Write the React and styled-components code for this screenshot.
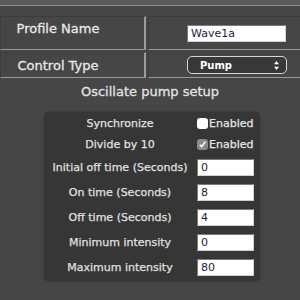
import styled, { createGlobalStyle } from "styled-components";

const GlobalStyle = createGlobalStyle`
  html, body {
    margin: 0;
    background: #464646;
  }
  body {
    width: 300px;
    height: 300px;
    overflow: hidden;
    font-family: "DejaVu Sans", Verdana, sans-serif;
    color: #e4e4e4;
  }
`;

const TopBar = styled.div`
  height: 5px;
  background: #5a5a5a;
  border-bottom: 1px solid #8e8e8e;
`;

const SettingsTable = styled.div`
  display: grid;
  grid-template-columns: 146px 1fr;
  grid-template-rows: 34px 26px;
  gap: 2px;
  margin-top: 10px;
`;

const Cell = styled.div`
  box-sizing: border-box;
  display: flex;
  align-items: center;
  border-top: 1px solid #3d3d3d;
  border-left: 1px solid #3d3d3d;
  border-right: 2px solid #9a9a9a;
  border-bottom: 1px solid #9a9a9a;
`;

const LabelCell = styled(Cell)`
  justify-content: center;
  padding: 0 29px ${(p) => p.$lift || 0}px 0;
  font-size: 13px;
  color: #e8e8e8;
  -webkit-text-stroke: 0.3px #e8e8e8;
`;

const ValueCell = styled(Cell)`
  padding-left: 38px;
  border-right: none;
`;

const TextInput = styled.input`
  box-sizing: border-box;
  width: ${(p) => p.$w || 57}px;
  height: 17px;
  margin: 0;
  padding: 0 3px;
  border: 1px solid;
  border-color: #7a7a7a #cfcfcf #cfcfcf #7a7a7a;
  background: #ffffff;
  font-family: "DejaVu Sans", Verdana, sans-serif;
  font-size: 11px;
  color: #1c1c3c;
  outline: none;
`;

const SelectBox = styled.div`
  position: relative;
  box-sizing: border-box;
  width: 100px;
  height: 18px;
  border: 1px solid #d6d6d6;
  border-radius: 5px;
  background: #383838;
  display: flex;
  align-items: center;
  padding-left: 12px;
  font-size: 10px;
  font-weight: bold;
  color: #ffffff;
`;

const Arrows = styled.svg`
  position: absolute;
  right: 6px;
  top: 3px;
`;

const Title = styled.div`
  margin-top: 6px;
  height: 16px;
  line-height: 16px;
  text-align: center;
  font-size: 13px;
  color: #e2e2e2;
  -webkit-text-stroke: 0.3px #e2e2e2;
`;

const Panel = styled.div`
  box-sizing: border-box;
  width: 216px;
  margin: 12px 0 0 44px;
  padding: 1px 6px 1px 4px;
  background: #363636;
  border-radius: 5px;
  box-shadow: 0 0 2px #2c2c2c;
  display: flex;
  flex-direction: column;
`;

const SetupRow = styled.div`
  display: grid;
  grid-template-columns: 144px 57px;
  column-gap: 5px;
  align-items: center;
  height: ${(p) => p.$h}px;
`;

const SetupLabel = styled.div`
  text-align: center;
  font-size: 11px;
  color: #e0e0e0;
  white-space: nowrap;
  -webkit-text-stroke: 0.25px #e0e0e0;
`;

const CheckWrap = styled.label`
  display: flex;
  align-items: center;
  gap: 1px;
  font-size: 11px;
  color: #e6e6e6;
  -webkit-text-stroke: 0.25px #e6e6e6;
`;

const Box = styled.span`
  box-sizing: border-box;
  width: 11px;
  height: 11px;
  border-radius: 3px;
  background: ${(p) => (p.$on ? "#8a8a8a" : "#ffffff")};
  display: flex;
  align-items: center;
  justify-content: center;
`;

const fields = [
  { label: "Initial off time (Seconds)", value: "0" },
  { label: "On time (Seconds)", value: "8" },
  { label: "Off time (Seconds)", value: "4" },
  { label: "Minimum intensity", value: "0" },
  { label: "Maximum intensity", value: "80" },
];

function Check({ on }) {
  return (
    <CheckWrap>
      <Box $on={on}>
        {on && (
          <svg width="9" height="9" viewBox="0 0 9 9">
            <path d="M1.8 4.8 L3.6 6.8 L7.4 1.6" fill="none" stroke="#fff" strokeWidth="1.5" />
          </svg>
        )}
      </Box>
      Enabled
    </CheckWrap>
  );
}

export default function App() {
  return (
    <>
      <GlobalStyle />
      <TopBar />
      <SettingsTable>
        <LabelCell $lift={10}>Profile Name</LabelCell>
        <ValueCell>
          <TextInput $w={99} defaultValue="Wave1a" />
        </ValueCell>
        <LabelCell>Control Type</LabelCell>
        <ValueCell>
          <SelectBox>
            Pump
            <Arrows width="7" height="11" viewBox="0 0 7 11">
              <path d="M3.5 1 L6 4.2 L1 4.2 Z" fill="#fff" />
              <path d="M3.5 10 L6 6.8 L1 6.8 Z" fill="#fff" />
            </Arrows>
          </SelectBox>
        </ValueCell>
      </SettingsTable>
      <Title>Oscillate pump setup</Title>
      <Panel>
        <SetupRow $h={21}>
          <SetupLabel>Synchronize</SetupLabel>
          <Check />
        </SetupRow>
        <SetupRow $h={21}>
          <SetupLabel>Divide by 10</SetupLabel>
          <Check on />
        </SetupRow>
        {fields.map(({ label, value }) => (
          <SetupRow key={label} $h={25}>
            <SetupLabel>{label}</SetupLabel>
            <TextInput defaultValue={value} />
          </SetupRow>
        ))}
      </Panel>
    </>
  );
}
